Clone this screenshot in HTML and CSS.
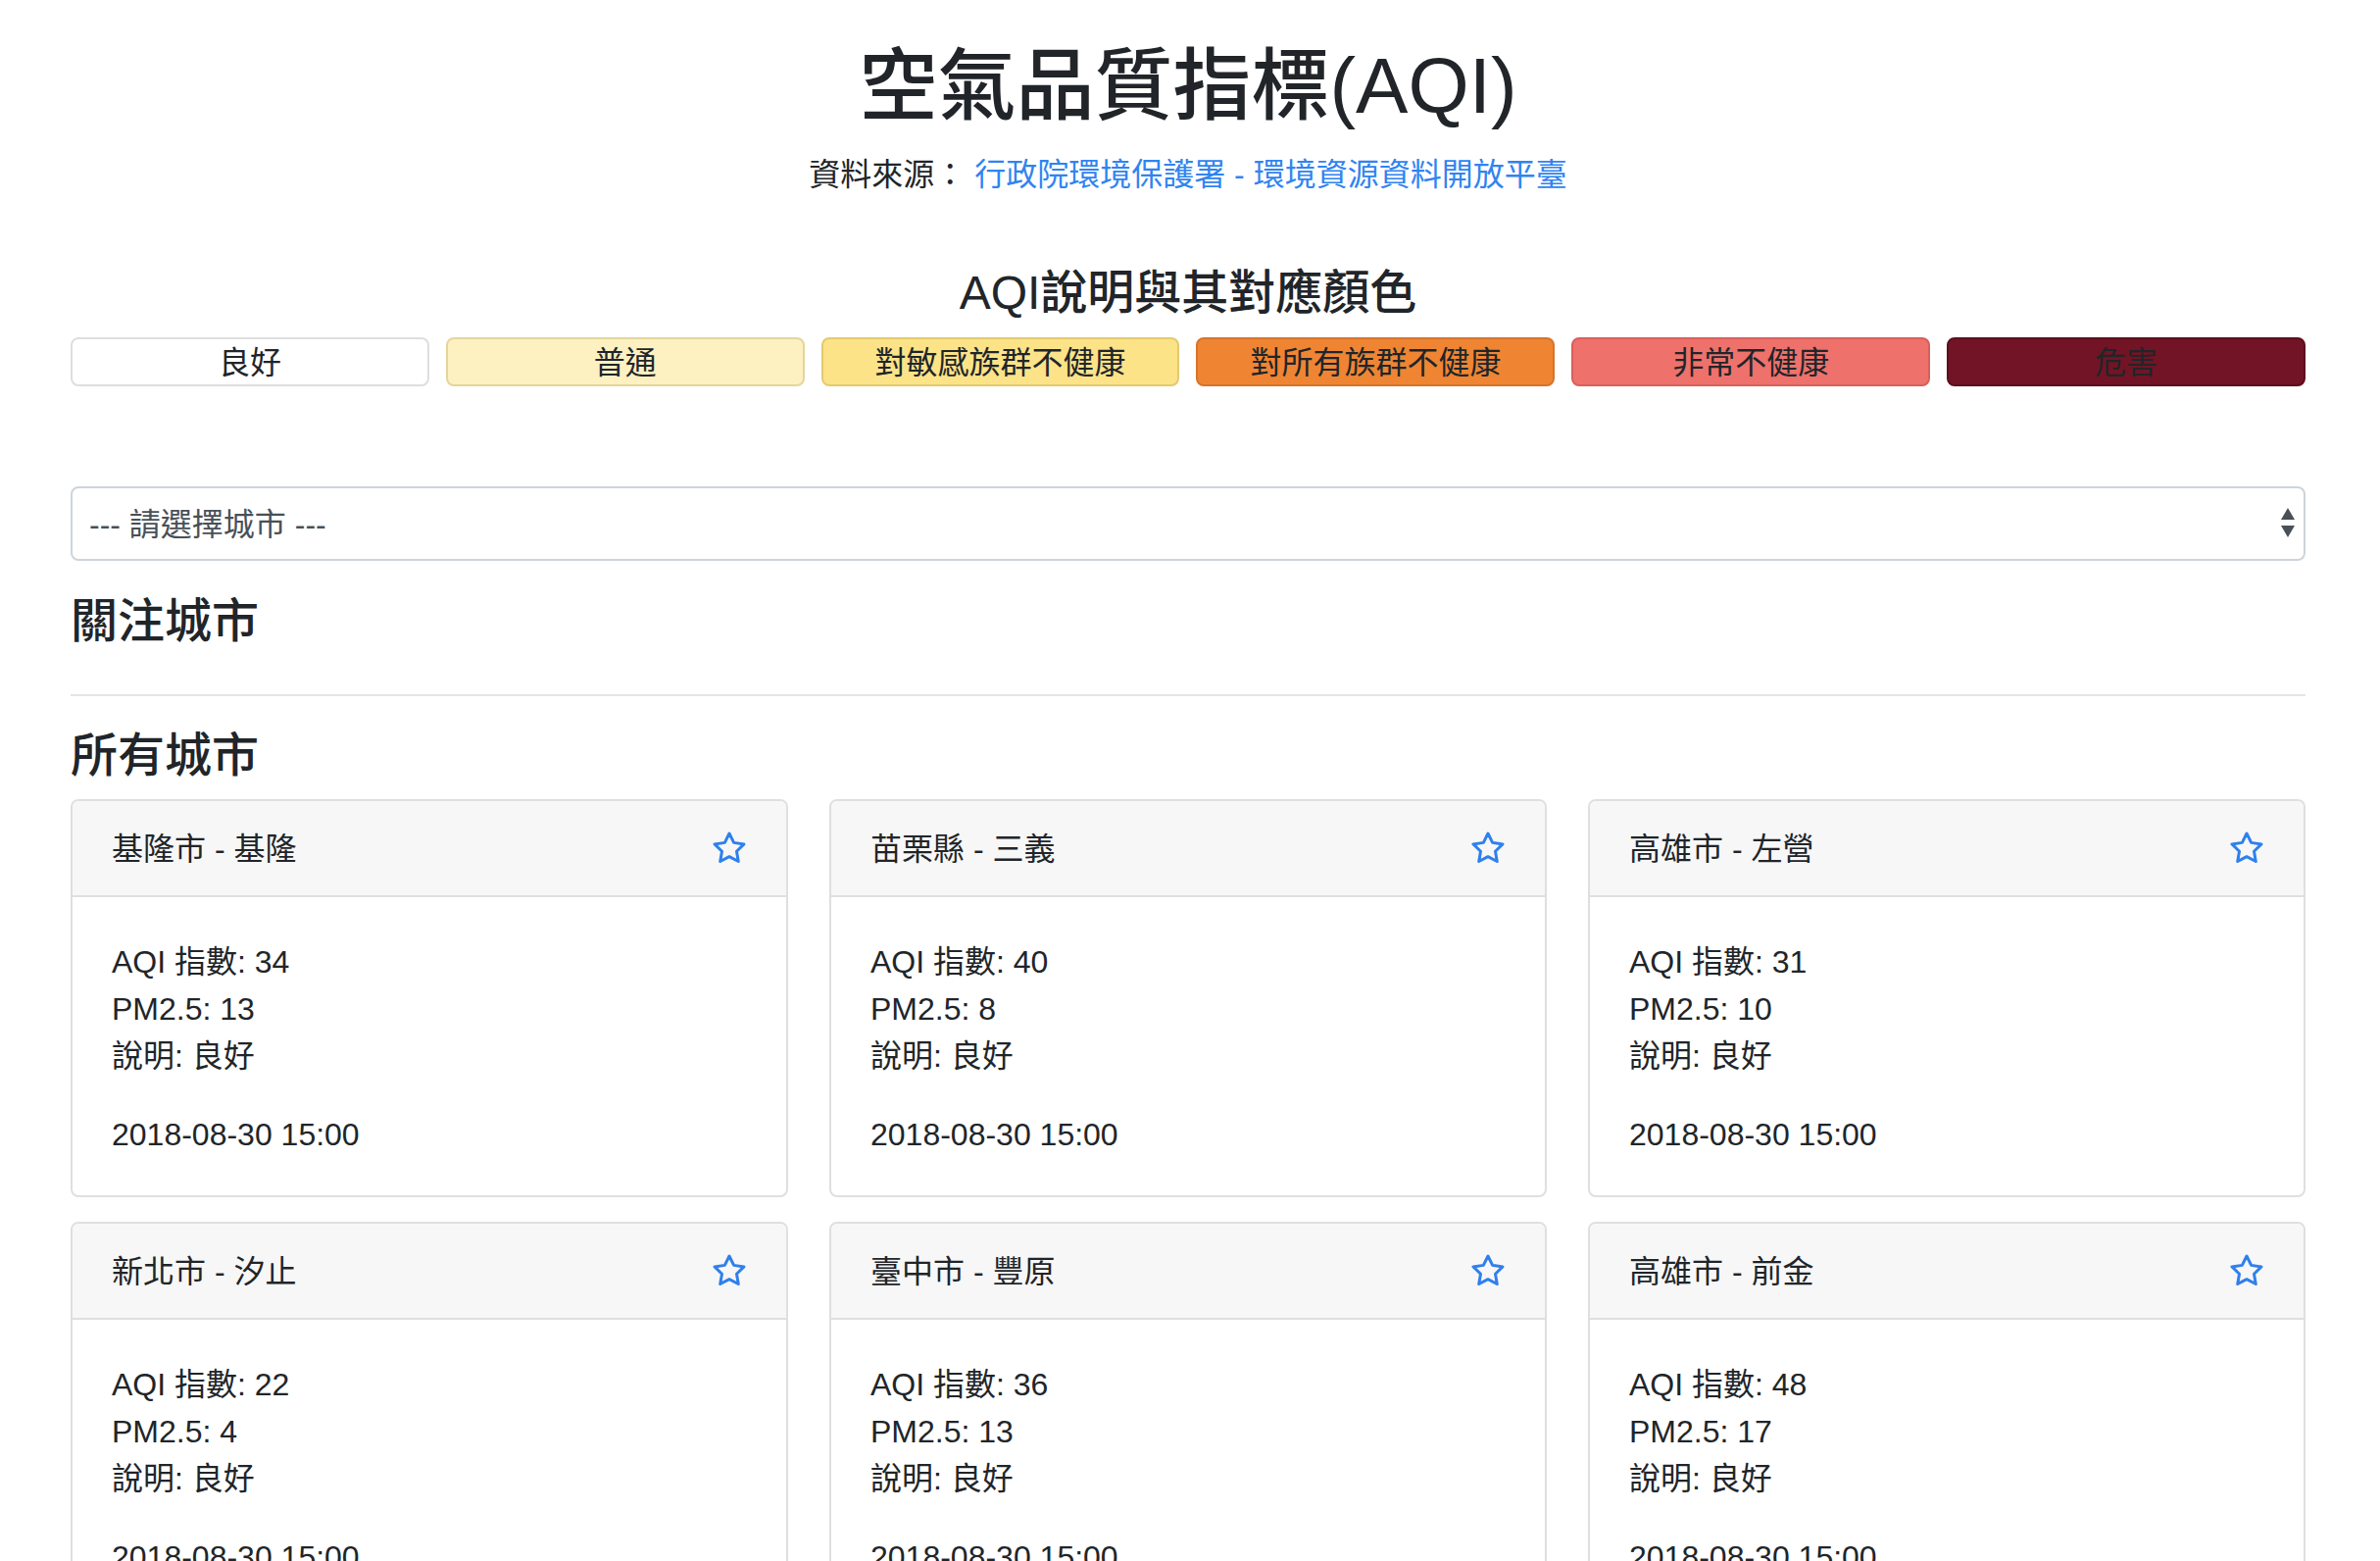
FILE: index.html
```html
<!DOCTYPE html>
<html lang="zh-Hant">
<head>
<meta charset="utf-8">
<title>空氣品質指標(AQI)</title>
<link rel="stylesheet" href="styles.css">
</head>
<body>
<div class="container">
  <header class="page-header">
    <h1 class="page-title">空氣品質指標(AQI)</h1>
    <p class="source">資料來源： <a href="#" class="source-link">行政院環境保護署 - 環境資源資料開放平臺</a></p>
  </header>

  <section class="legend">
    <h4 class="legend-title">AQI說明與其對應顏色</h4>
    <div class="legend-list">
      <div class="legend-item lv-good">良好</div>
      <div class="legend-item lv-moderate">普通</div>
      <div class="legend-item lv-sensitive">對敏感族群不健康</div>
      <div class="legend-item lv-unhealthy">對所有族群不健康</div>
      <div class="legend-item lv-very">非常不健康</div>
      <div class="legend-item lv-hazard">危害</div>
    </div>
  </section>

  <div class="select-wrap">
    <select class="city-select">
      <option>--- 請選擇城市 ---</option>
    </select>
    <svg class="select-arrows" viewBox="0 0 14 30" aria-hidden="true">
      <polygon points="7,0 14,12 0,12" fill="#495057"/>
      <polygon points="0,18 14,18 7,30" fill="#495057"/>
    </svg>
  </div>

  <h4 class="section-title followed">關注城市</h4>
  <hr class="divider">
  <h4 class="section-title all">所有城市</h4>

  <div class="card-grid">
    <div class="card">
      <div class="card-header">
        <span class="card-title">基隆市 - 基隆</span>
        <svg class="star" viewBox="0 0 24 24"><polygon points="12 2 15.09 8.26 22 9.27 17 14.14 18.18 21.02 12 17.77 5.82 21.02 7 14.14 2 9.27 8.91 8.26 12 2"/></svg>
      </div>
      <div class="card-body">
        <p class="card-stats">AQI 指數: 34<br>PM2.5: 13<br>說明: 良好</p>
        <p class="card-time">2018-08-30 15:00</p>
      </div>
    </div>
    <div class="card">
      <div class="card-header">
        <span class="card-title">苗栗縣 - 三義</span>
        <svg class="star" viewBox="0 0 24 24"><polygon points="12 2 15.09 8.26 22 9.27 17 14.14 18.18 21.02 12 17.77 5.82 21.02 7 14.14 2 9.27 8.91 8.26 12 2"/></svg>
      </div>
      <div class="card-body">
        <p class="card-stats">AQI 指數: 40<br>PM2.5: 8<br>說明: 良好</p>
        <p class="card-time">2018-08-30 15:00</p>
      </div>
    </div>
    <div class="card">
      <div class="card-header">
        <span class="card-title">高雄市 - 左營</span>
        <svg class="star" viewBox="0 0 24 24"><polygon points="12 2 15.09 8.26 22 9.27 17 14.14 18.18 21.02 12 17.77 5.82 21.02 7 14.14 2 9.27 8.91 8.26 12 2"/></svg>
      </div>
      <div class="card-body">
        <p class="card-stats">AQI 指數: 31<br>PM2.5: 10<br>說明: 良好</p>
        <p class="card-time">2018-08-30 15:00</p>
      </div>
    </div>
    <div class="card">
      <div class="card-header">
        <span class="card-title">新北市 - 汐止</span>
        <svg class="star" viewBox="0 0 24 24"><polygon points="12 2 15.09 8.26 22 9.27 17 14.14 18.18 21.02 12 17.77 5.82 21.02 7 14.14 2 9.27 8.91 8.26 12 2"/></svg>
      </div>
      <div class="card-body">
        <p class="card-stats">AQI 指數: 22<br>PM2.5: 4<br>說明: 良好</p>
        <p class="card-time">2018-08-30 15:00</p>
      </div>
    </div>
    <div class="card">
      <div class="card-header">
        <span class="card-title">臺中市 - 豐原</span>
        <svg class="star" viewBox="0 0 24 24"><polygon points="12 2 15.09 8.26 22 9.27 17 14.14 18.18 21.02 12 17.77 5.82 21.02 7 14.14 2 9.27 8.91 8.26 12 2"/></svg>
      </div>
      <div class="card-body">
        <p class="card-stats">AQI 指數: 36<br>PM2.5: 13<br>說明: 良好</p>
        <p class="card-time">2018-08-30 15:00</p>
      </div>
    </div>
    <div class="card">
      <div class="card-header">
        <span class="card-title">高雄市 - 前金</span>
        <svg class="star" viewBox="0 0 24 24"><polygon points="12 2 15.09 8.26 22 9.27 17 14.14 18.18 21.02 12 17.77 5.82 21.02 7 14.14 2 9.27 8.91 8.26 12 2"/></svg>
      </div>
      <div class="card-body">
        <p class="card-stats">AQI 指數: 48<br>PM2.5: 17<br>說明: 良好</p>
        <p class="card-time">2018-08-30 15:00</p>
      </div>
    </div>
  </div>
</div>
</body>
</html>
```

FILE: styles.css
```css
* {
  box-sizing: border-box;
}

html,
body {
  margin: 0;
  padding: 0;
}

body {
  font-family: "Liberation Sans", "Noto Sans CJK TC", sans-serif;
  font-size: 32px;
  line-height: 48px;
  color: #212529;
  background: #ffffff;
  padding-right: 4px;
}

.container {
  width: 2280px;
  margin: 0 auto;
}

/* ---------- header ---------- */
.page-header {
  text-align: center;
  padding-top: 40px;
}

.page-title {
  font-size: 80px;
  font-weight: 500;
  line-height: 96px;
  margin: 0 0 18px;
}

.source {
  margin: 0;
}

.source-link {
  color: #3084f0;
  text-decoration: none;
}

/* ---------- legend ---------- */
.legend {
  margin-top: 68px;
}

.legend-title {
  text-align: center;
  font-size: 48px;
  font-weight: 500;
  line-height: 58px;
  margin: 0 0 16px;
}

.legend-list {
  display: flex;
  gap: 17px;
}

.legend-item {
  flex: 1;
  height: 50px;
  padding-top: 2px;
  border: 2px solid #dedede;
  border-radius: 8px;
  text-align: center;
  line-height: 44px;
  color: #212529;
}

.lv-good {
  background: #ffffff;
  border-color: #dedede;
}

.lv-moderate {
  background: #fdf0c1;
  border-color: #e5d59c;
}

.lv-sensitive {
  background: #fce388;
  border-color: #e4ca6d;
}

.lv-unhealthy {
  background: #ef8533;
  border-color: #d6742b;
}

.lv-very {
  background: #ef716c;
  border-color: #d85f5b;
}

.lv-hazard {
  background: #721425;
  border-color: #5c0f1d;
}

/* ---------- select ---------- */
.select-wrap {
  position: relative;
  margin-top: 102px;
}

.city-select {
  -webkit-appearance: none;
  appearance: none;
  display: block;
  width: 100%;
  height: 76px;
  border: 2px solid #ced4da;
  border-radius: 8px;
  background: #ffffff;
  color: #495057;
  font: inherit;
  padding: 2px 60px 0 17px;
  outline: none;
}

.select-arrows {
  position: absolute;
  right: 11px;
  top: 22px;
  width: 14px;
  height: 30px;
  pointer-events: none;
}

/* ---------- sections ---------- */
.section-title {
  font-size: 48px;
  font-weight: 500;
  line-height: 58px;
  margin: 0;
}

.section-title.followed {
  margin-top: 33px;
}

.section-title.all {
  margin-bottom: 15px;
}

.divider {
  border: 0;
  border-top: 2px solid #e5e5e5;
  height: 0;
  margin: 45px 0 32px;
}

/* ---------- cards ---------- */
.card-grid {
  display: grid;
  grid-template-columns: repeat(3, 1fr);
  column-gap: 42px;
  row-gap: 25px;
}

.card {
  border: 2px solid #dfdfdf;
  border-radius: 8px;
  background: #ffffff;
  overflow: hidden;
}

.card-header {
  display: flex;
  justify-content: space-between;
  align-items: center;
  padding: 25px 40px 23px;
  background: #f7f7f7;
  border-bottom: 2px solid #dfdfdf;
}

.card-title {
  line-height: 48px;
}

.star {
  width: 36px;
  height: 36px;
  margin-top: -2px;
  fill: none;
  stroke: #2f80ed;
  stroke-width: 2;
  stroke-linejoin: round;
  stroke-linecap: round;
}

.card-body {
  padding: 42px 40px 38px;
}

.card-stats {
  margin: 0 0 32px;
}

.card-time {
  margin: 0;
}
```
